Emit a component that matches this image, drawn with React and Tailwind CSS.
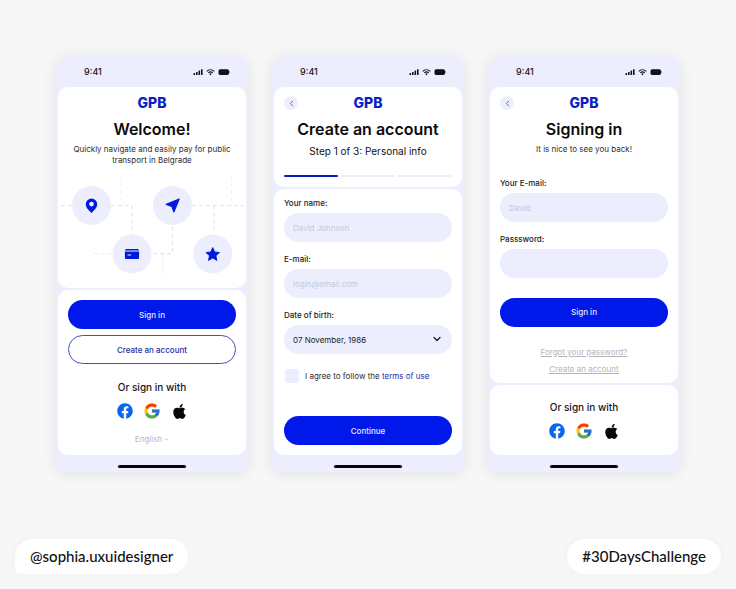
import { useId } from "react";
import { FaFacebook, FaApple } from "react-icons/fa";
import { FcGoogle } from "react-icons/fc";
import { ChevronLeft, ChevronDown } from "lucide-react";

function StatusBar() {
  return (
    <div className="flex h-[31px] items-center justify-between pr-4 pl-[26px]">
      <span className="text-[9px] leading-3 font-medium text-[#15151c]">9:41</span>
      <svg viewBox="0 0 38 8" className="h-2 w-[38px]" fill="#111118" aria-hidden="true">
        <rect x="1.500" y="5" width="1.600" height="2" rx="0.500" />
        <rect x="4" y="4" width="1.600" height="3" rx="0.500" />
        <rect x="6.500" y="2.600" width="1.600" height="4.400" rx="0.500" />
        <rect x="9" y="1.200" width="1.600" height="5.800" rx="0.500" />
        <path d="M14.700 3.300a5.600 5.600 0 0 1 7.600 0M16.300 4.900a3.300 3.300 0 0 1 4.400 0" fill="none" stroke="#111118" strokeWidth="1.100" />
        <path d="M17.200 5.900a1.900 1.900 0 0 1 2.600 0L18.500 7.300z" />
        <rect x="26.500" y="1.300" width="10.500" height="5.600" rx="1.600" />
        <path d="M37.400 3.100c.7.300.7 1.700 0 2z" />
      </svg>
    </div>
  );
}

function Phone({ children }) {
  return (
    <section className="flex min-w-0 flex-col rounded-xl bg-[#eceefe] px-[2px] shadow-[0_2px_14px_rgba(40,40,60,0.10)]">
      <StatusBar />
      <div className="flex flex-1 flex-col gap-[2px]">{children}</div>
      <div className="flex h-[17px] items-center justify-center pt-[5px]">
        <div className="h-[3px] w-[68px] rounded-full bg-[#08080c]" />
      </div>
    </section>
  );
}

function Card({ className = "", children }) {
  return <div className={`flex flex-col rounded-[10px] bg-white px-[10px] ${className}`}>{children}</div>;
}

function Header({ title, back }) {
  return (
    <header className="pt-2">
      <div className="grid h-4 grid-cols-3 items-center">
        <div>
          {back && (
            <button type="button" aria-label="Back" className="flex size-[14px] items-center justify-center rounded-full bg-[#eceefe] text-[#5b5f95]">
              <ChevronLeft size={9} strokeWidth={2.4} />
            </button>
          )}
        </div>
        <span className="text-center text-[14px] leading-4 font-extrabold text-[#0a22c4]">GPB</span>
      </div>
      <h1 className="mt-[7px] text-center text-[16px] leading-[22px] font-semibold whitespace-nowrap text-[#0b0b0f]">{title}</h1>
    </header>
  );
}

function Primary({ children }) {
  return (
    <button type="button" className="h-[29px] w-full shrink-0 rounded-full bg-[#0018ea] text-[8px] font-medium text-[#e4e8ff]">
      {children}
    </button>
  );
}

function Field({ label, children }) {
  const id = useId();
  return (
    <div className="flex flex-col gap-1">
      <label htmlFor={id} className="text-[8px] leading-3 font-medium text-[#1b1b22]">{label}</label>
      {children(id)}
    </div>
  );
}

function TextField({ label, type = "text", placeholder }) {
  return (
    <Field label={label}>
      {(id) => (
        <input
          id={id}
          type={type}
          placeholder={placeholder}
          className="h-[29px] w-full rounded-full bg-[#eceefe] px-[9px] text-[8px] text-[#1b1b22] outline-none placeholder:text-[#c6c8da]"
        />
      )}
    </Field>
  );
}

function Social() {
  return (
    <div className="flex flex-col items-center gap-[9px]">
      <p className="text-[10px] leading-[14px] font-medium text-[#15151a]">Or sign in with</p>
      <div className="flex items-center gap-[11px]">
        <button type="button" aria-label="Facebook" className="size-4"><FaFacebook size={16} color="#0866f0" /></button>
        <button type="button" aria-label="Google" className="size-4">
          <FcGoogle size={18} className="-m-px max-w-none" />
        </button>
        <button type="button" aria-label="Apple" className="flex size-4 justify-center"><FaApple size={17} className="shrink-0" color="#08080a" /></button>
      </div>
    </div>
  );
}

function RouteMap() {
  return (
    <svg viewBox="0 0 188 112" className="-mx-[10px] mt-[10px] block" aria-hidden="true">
      <g fill="none" stroke="#e2e2e8" strokeWidth="1" strokeDasharray="4 3">
        <path d="M3 29.500H15M53 29.500H74V60" />
        <path d="M134 29.500H186" />
        <path d="M156 29.500V58" />
        <path d="M114.500 51V77.500H93" />
        <path d="M36 77.500H55" stroke="#ececf1" />
        <path d="M63.500 0V29M173.500 0V29M104.500 78V101" stroke="#f0f0f4" />
      </g>
      <g fill="#eceefe">
        <circle cx="33.500" cy="29.500" r="19.500" />
        <circle cx="114.500" cy="29.500" r="19.500" />
        <circle cx="74" cy="78" r="19.500" />
        <circle cx="154.700" cy="78" r="19.500" />
      </g>
      <g fill="#0019dc">
        <path fillRule="evenodd" d="M33.500 22.500a5.700 5.700 0 0 0-5.700 5.700c0 3.900 3.900 6.500 5.700 8.900 1.800-2.400 5.700-5 5.700-8.900a5.700 5.700 0 0 0-5.700-5.700zm0 3.300a2.300 2.300 0 1 1 0 4.600 2.300 2.300 0 0 1 0-4.600z" />
        <path d="M120.900 22.500c.5-.2 1 .3.800.8l-5.200 12.800c-.2.600-1.100.6-1.300 0l-1.700-5.100-5.300-1.900c-.8-.3-.8-1.100-.1-1.400z" />
        <path d="M68.500 73h11c.9 0 1.600.6 1.600 1.500H66.900c0-.9.700-1.500 1.600-1.500z" />
        <path fillRule="evenodd" d="M66.900 75.600h14.200v5.900c0 .9-.7 1.600-1.600 1.600h-11c-.9 0-1.600-.7-1.600-1.600zm2.600 2.800v1h3.600v-1z" />
        <path strokeLinejoin="round" stroke="#0019dc" strokeWidth="0.900" d="M154.700 71.600l2 4.400 4.800.5-3.600 3.200 1 4.700-4.200-2.400-4.200 2.400 1-4.700-3.600-3.200 4.800-.5z" />
      </g>
    </svg>
  );
}

function Welcome() {
  return (
    <Phone>
      <Card className="flex-1">
        <Header title="Welcome!" />
        <p className="mx-auto mt-1 max-w-[164px] text-center text-[8px] leading-[11px] text-[#2c2c33]">
          Quickly navigate and easily pay for public transport in Belgrade
        </p>
        <RouteMap />
      </Card>
      <Card className="pt-[10px] pb-[10px]">
        <Primary>Sign in</Primary>
        <button type="button" className="mt-[6px] h-[29px] w-full rounded-full border border-[#4a50b8] text-[8px] font-medium text-[#1f2ca0]">
          Create an account
        </button>
        <div className="mt-4"><Social /></div>
        <button type="button" className="mx-auto mt-[14px] flex items-center gap-[2px] text-[8px] leading-3 text-[#b9b9c0]">
          English <ChevronDown size={5} strokeWidth={4} />
        </button>
      </Card>
    </Phone>
  );
}

function CreateAccount() {
  return (
    <Phone>
      <Card className="pb-[10px]">
        <Header title="Create an account" back />
        <p className="mt-1 text-center text-[10px] leading-[14px] text-[#101015]">Step 1 of 3: Personal info</p>
        <div className="mt-[17px] grid grid-cols-3 gap-[3px]">
          <div className="h-[2px] rounded-full bg-[#0a1cc0]" />
          <div className="h-[2px] rounded-full bg-[#eeeff8]" />
          <div className="h-[2px] rounded-full bg-[#eeeff8]" />
        </div>
      </Card>
      <Card className="flex-1 pt-2 pb-[10px]">
        <div className="flex flex-col gap-[11px]">
          <TextField label="Your name:" placeholder="David Johnson" />
          <TextField label="E-mail:" type="email" placeholder="login@email.com" />
          <Field label="Date of birth:">
            {(id) => (
              <div className="relative">
                <select id={id} className="block h-[29px] w-full appearance-none rounded-full bg-[#eceefe] px-[9px] text-[8px] text-[#1b1b22] outline-none">
                  <option>07 November, 1986</option>
                </select>
                <ChevronDown size={12} strokeWidth={2.4} className="pointer-events-none absolute top-2 right-[9px] text-[#15151c]" />
              </div>
            )}
          </Field>
        </div>
        <label className="mt-[15px] flex items-center gap-[6px] pl-[1px] text-[8px] leading-3 text-[#2c2c33]">
          <input type="checkbox" className="size-[14px] appearance-none rounded-[3px] bg-[#eceefe] checked:bg-[#0018ea]" />
          <span>I agree to follow the <a href="#terms" className="text-[#1f2ca0]">terms of use</a></span>
        </label>
        <div className="mt-auto"><Primary>Continue</Primary></div>
      </Card>
    </Phone>
  );
}

function SignIn() {
  return (
    <Phone>
      <Card className="flex-1 pb-2">
        <Header title="Signing in" back />
        <p className="mt-1 text-center text-[8px] leading-[11px] text-[#2c2c33]">It is nice to see you back!</p>
        <div className="mt-[22px] flex flex-col gap-[11px]">
          <TextField label="Your E-mail:" type="email" placeholder="David" />
          <TextField label="Passsword:" type="password" />
        </div>
        <div className="mt-[19px]"><Primary>Sign in</Primary></div>
        <div className="mt-[19px] flex flex-col items-center gap-[5px] text-[8px] leading-3 text-[#b4b4bb] underline underline-offset-1">
          <a href="#forgot">Forgot your password?</a>
          <a href="#create">Create an account</a>
        </div>
      </Card>
      <Card className="pt-[15px] pb-4"><Social /></Card>
    </Phone>
  );
}

export default function App() {
  return (
    <div className="flex min-h-screen flex-col justify-between bg-[#f7f7f7] font-['Inter','Liberation_Sans',sans-serif]">
      <main className="grid grid-cols-3 gap-6 px-14 pt-14">
        <Welcome />
        <CreateAccount />
        <SignIn />
      </main>
      <footer className="flex justify-between px-[15px] pt-8 pb-[15px] font-['Lato',sans-serif] text-[15px] leading-[19px] font-medium text-[#111114]">
        <span className="rounded-[18px] rounded-bl-[5px] bg-white px-[15px] py-2 shadow-[0_0_8px_rgba(0,0,0,0.03)]">@sophia.uxuidesigner</span>
        <span className="rounded-[18px] bg-white px-[15px] py-2 shadow-[0_0_8px_rgba(0,0,0,0.03)]">#30DaysChallenge</span>
      </footer>
    </div>
  );
}
